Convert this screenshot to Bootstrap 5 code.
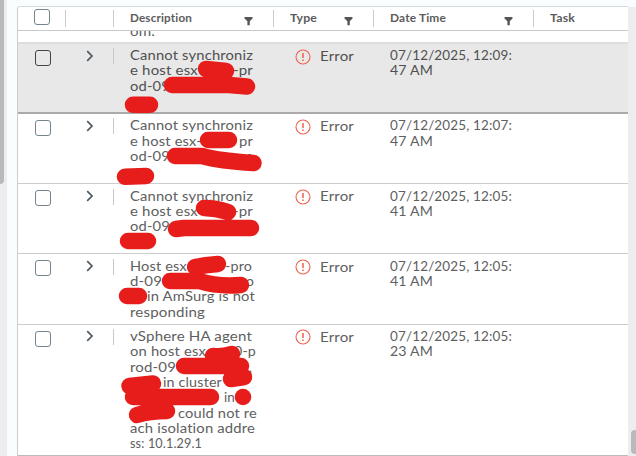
<!DOCTYPE html>
<html lang="en">
<head>
<meta charset="utf-8">
<title>Events</title>
<link href="https://cdn.jsdelivr.net/npm/bootstrap@5.3.0/dist/css/bootstrap.min.css" rel="stylesheet">
<style>
body{width:636px;height:456px;font-family:Lato,"Liberation Sans",sans-serif;font-size:13.6px;line-height:15.35px;color:#606060;background:#fafdfd}
.page-track{width:7px;background:#ededed}
.page-thumb{width:4px;height:184px;background:#b9b9b9;border-bottom-right-radius:4px}
.datagrid{margin:6px 0 0 10px;width:611px;height:450px;border:1px solid #c8ced1;border-top-color:#d0d9de;border-right:0;border-bottom-color:#bbb;border-top-left-radius:3px;background:#fff}
.grid-track{width:8px;margin-top:7px;background:#ededed}
.grid-thumb{width:5px;height:24px;margin:423px 0 0 3px;background:#b9b9b9;border-radius:4px 0 0 4px}
.grid-head{height:24px;border-bottom:1px solid #c8c8c8;font-size:11px;font-weight:700;line-height:12px;color:#5c5c5c}
.grid-tail{height:11px;padding-left:112px;line-height:11px}
.grid-tail span{margin-top:-5px}
.grid-row{height:70.2px;border-bottom:1px solid #ccc;padding-top:4.4px}
.grid-row.selected{height:72px;background:#e8e8e8;border-top:2px solid #dedede;border-bottom:2px solid #aaa;color:#505050;padding-top:4px}
.grid-row.tall{height:132px;border-bottom:0}
.c-check{width:47px;padding-left:17px}.c-open{width:48px;padding-left:20px}
.c-desc{width:160px;padding-left:17px}.c-type{width:100px;padding-left:17px}
.c-date{width:160px;padding-left:17px}.c-task{padding-left:17px}
.grid-head .c-open,.grid-head .c-desc,.grid-head .c-type,.grid-head .c-date,.grid-head .c-task{height:17px;margin-top:3px;border-left:1px solid #c6cdd0;padding-left:16px}
.grid-head .c-check{padding-left:16px}
.grid-row .c-desc{position:relative}
.grid-row .c-desc::before{content:"";position:absolute;left:0;top:0;width:1px;height:16px;background:#c8c8c8}
.tick{width:16px;height:16px;border:1px solid #75858d;border-radius:3px;margin-top:1.6px;background:transparent}
.selected .tick{border-color:#444}
.head-label{margin-top:2px}
.funnel{margin:7px 19px 0 0}
.ln{height:15.35px;white-space:pre}
.caret-r{margin-top:.5px}
.err{margin:.5px 0 0 5px}
.err svg{margin-right:9px}
[data-w]{display:inline-block;transform-origin:0 50%;white-space:nowrap;letter-spacing:.15px}
.scribbles{left:0;top:0;pointer-events:none}
</style>
<script src="https://cdn.jsdelivr.net/npm/bootstrap@5.3.0/dist/js/bootstrap.bundle.min.js"></script>
</head>
<body class="position-relative overflow-hidden d-flex">
<div class="page-track flex-shrink-0"><div class="page-thumb"></div></div>
<main class="datagrid flex-shrink-0 overflow-hidden">
  <div class="grid-head d-flex">
    <div class="c-check"><div class="tick"></div></div><div class="c-open"></div>
    <div class="c-desc d-flex justify-content-between"><span class="head-label"><span data-w="62">Description</span></span><svg class="funnel" width="10" height="10"><path d="M.5 0h8v1.500L5.8 4.300v4H3.4v-4L.5 1.500z" fill="#565656"/></svg></div>
    <div class="c-type d-flex justify-content-between"><span class="head-label"><span data-w="27">Type</span></span><svg class="funnel" width="10" height="10"><path d="M.5 0h8v1.500L5.8 4.300v4H3.4v-4L.5 1.500z" fill="#565656"/></svg></div>
    <div class="c-date d-flex justify-content-between"><span class="head-label"><span data-w="56">Date Time</span></span><svg class="funnel" width="10" height="10"><path d="M.5 0h8v1.500L5.8 4.300v4H3.4v-4L.5 1.500z" fill="#565656"/></svg></div>
    <div class="c-task"><div class="head-label"><span data-w="25">Task</span></div></div>
  </div>
  <div class="grid-tail overflow-hidden d-flex align-items-start"><span data-w="25">om.</span></div>
  <div id="rows"></div>
</main>
<div class="grid-track flex-shrink-0"><div class="grid-thumb"></div></div>

<svg class="scribbles position-absolute" width="636" height="456" fill="none" stroke="#e71d1c" stroke-width="16.500" stroke-linecap="round" stroke-linejoin="round">
  <path d="M206 69L226 71M172 85H229L247 86.500M133 104.800H150"/>
  <path d="M208 140H229M175 156H202Q220 161 253.500 163M125 176.800L146 176"/>
  <path d="M204 208Q216 208 228 212M176 229L184 228H251M128 241H148"/>
  <path d="M195 267Q205 265 218 264M170 281H199Q218 287 241 285M127 296H139"/>
  <path d="M213 356Q222 357 232 354M184 366H241M231 379L244 377M129.500 386L153 383.500M133 397H211M137 415Q149 411 167 411"/>
  <circle cx="243" cy="397" r="8.300" fill="#e71d1c" stroke="none"/>
</svg>
<script>
// Description lines hold [text, width] pieces; two pieces are pushed to the ends of the line.
const first = [["Cannot synchroniz",123]];
const events = [
  {kind:"selected", date:["07/12/2025, 12:09:","47 AM"], desc:[[123,first],[123,[["e host esx",68],["-pr",20]]],[123,[["od-09",40]]]]},
  {kind:"", date:["07/12/2025, 12:07:","47 AM"], desc:[[123,first],[123,[["e host esx-",72],["pr",14]]],[123,[["od-09",40],["e",7]]]]},
  {kind:"", date:["07/12/2025, 12:05:","41 AM"], desc:[[123,first],[123,[["e host esx",68],["-pr",20]]],[123,[["od-09",40]]]]},
  {kind:"", date:["07/12/2025, 12:05:","41 AM"], desc:[[122,[["Host esx",57],["-pro",27]]],[124,[["d-09",32],["o",8]]],[125,[["",0],["in AmSurg is not",108]]],[75,[["responding",75]]]]},
  {kind:"tall", date:["07/12/2025, 12:05:","23 AM"], desc:[[122,[["vSphere HA agent",122]]],[126,[["on host esx",76],["0-p",22]]],[122,[["rod-09",46],[",",3]]],[92,[["",0],["in cluster",59]]],[105,[["",0],["in",11]]],[127,[["",0],["could not re",79]]],[125,[["ach isolation addre",125]]],[72,[["ss: 10.1.29.1",72]]]]}
];
document.getElementById("rows").innerHTML = events.map(e => `
<div class="grid-row ${e.kind} d-flex">
  <div class="c-check"><div class="tick"></div></div>
  <div class="c-open"><svg class="caret-r d-block" width="10" height="13"><path d="M2.200 2.200L7 7L2.200 11.800" fill="none" stroke="#4c5a62" stroke-width="1.700"/></svg></div>
  <div class="c-desc">${e.desc.map(([w,p]) => `<div class="ln d-flex justify-content-between" style="width:${w}px">${p.map(([t,pw]) => `<span data-w="${pw}">${t}</span>`).join("")}</div>`).join("")}</div>
  <div class="c-type"><div class="err d-flex align-items-center"><svg width="16" height="16" fill="none" stroke="#f0604a" stroke-width="1.100"><circle cx="8" cy="8" r="7"/><path d="M8 4v5M8 10.500v1.500" stroke-width="1.500"/></svg><span data-w="34">Error</span></div></div>
  <div class="c-date"><div class="ln d-flex"><span data-w="122">${e.date[0]}</span></div><div class="ln d-flex"><span data-w="43">${e.date[1]}</span></div></div>
</div>`).join("");
// Widen each text to its own width; the margin keeps the layout in step with the scaled box.
const labels = [...document.querySelectorAll("[data-w]")].filter(s => s.textContent);
labels.forEach(s => s.classList.add("flex-shrink-0"));
const widths = labels.map(s => s.getBoundingClientRect().width);
labels.forEach((s, i) => {
  s.style.transform = `scaleX(${s.dataset.w / widths[i]})`;
  s.style.marginRight = (s.dataset.w - widths[i]) + "px";
});
</script>
</body>
</html>
